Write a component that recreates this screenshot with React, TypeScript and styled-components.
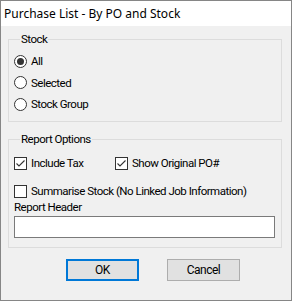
import React from 'react'
import styled, { createGlobalStyle } from 'styled-components'

const GlobalStyle = createGlobalStyle`
  html, body {
    margin: 0;
    padding: 0;
    background: #f0f0f0;
  }
  * {
    box-sizing: border-box;
  }
`

const Window = styled.div`
  background: #f0f0f0;
  border: 1px solid #868686;
  color: #000;
  display: flex;
  flex-direction: column;
  font-family: Roboto, 'Segoe UI', sans-serif;
  font-size: 11.5px;
  height: 301px;
  letter-spacing: -0.5px;
  width: 292px;
`

const TitleBar = styled.div`
  align-items: center;
  background: #fff;
  display: flex;
  flex-shrink: 0;
  font-family: 'Noto Sans', 'Segoe UI', sans-serif;
  font-size: 12px;
  height: 25px;
  letter-spacing: 0;
  padding-left: 3px;
`

const Body = styled.div`
  padding: 5px 9px 0 7px;
`

const Group = styled.fieldset<{ $gap?: number }>`
  border: 1px solid #dcdcdc;
  margin: ${(p) => p.$gap ?? 0}px 0 0 0;
  min-width: 0;
  padding: 0 5px;
`

const Caption = styled.legend`
  line-height: 16px;
  margin-left: 6px;
  padding: 0 1px;
`

const RadioList = styled.div`
  display: flex;
  flex-direction: column;
  padding: 3px 0 6px;
`

const OptionRow = styled.label<{ $h?: number; $top?: number }>`
  align-items: center;
  column-gap: 4px;
  display: flex;
  height: ${(p) => p.$h ?? 22}px;
  margin-top: ${(p) => p.$top ?? 0}px;
  white-space: nowrap;
`

const RadioMark = styled.span<{ $on?: boolean }>`
  align-items: center;
  background: #fff;
  border: 1px solid #333;
  border-radius: 50%;
  display: inline-flex;
  flex-shrink: 0;
  height: 13px;
  justify-content: center;
  width: 13px;

  &::after {
    background: #333;
    border-radius: 50%;
    content: '';
    display: ${(p) => (p.$on ? 'block' : 'none')};
    height: 7px;
    width: 7px;
  }
`

const BoxMark = styled.span`
  background: #fff;
  border: 1px solid #333;
  display: inline-flex;
  flex-shrink: 0;
  height: 13px;
  width: 13px;
`

const OptionsBlock = styled.div`
  display: flex;
  flex-direction: column;
  padding: 7px 0 9px;
`

const CheckGrid = styled.div`
  display: grid;
  grid-template-columns: 101px 1fr;
`

const FieldLabel = styled.div`
  line-height: 16px;
  margin-top: -1px;
`

const TextInput = styled.input`
  background: #fff;
  border: 1px solid #7a7a7a;
  height: 22px;
  margin: 1px 0 0;
  outline: none;
  padding: 0 3px;
  width: 261px;
`

const ButtonRow = styled.div`
  column-gap: 28px;
  display: flex;
  margin-top: 11px;
  padding-left: 58px;
`

const Button = styled.button<{ $primary?: boolean }>`
  background: #e1e1e1;
  border: ${(p) => (p.$primary ? '2px solid #0078d7' : '1px solid #adadad')};
  color: #000;
  font-family: inherit;
  font-size: 12px;
  height: 22px;
  letter-spacing: inherit;
  padding: 0;
  width: 73px;
`

const Check = ({ on }: { on?: boolean }) => (
  <BoxMark>
    {on && (
      <svg width="11" height="11" viewBox="0 0 11 11">
        <path d="M1.5 5.5 L4 8 L9.5 2.5" fill="none" stroke="#333" strokeWidth="1.1" />
      </svg>
    )}
  </BoxMark>
)

export default function App() {
  return (
    <>
      <GlobalStyle />
      <Window>
        <TitleBar>Purchase List - By PO and Stock</TitleBar>
        <Body>
          <Group>
            <Caption>Stock</Caption>
            <RadioList>
              <OptionRow>
                <RadioMark $on />
                All
              </OptionRow>
              <OptionRow $h={21}>
                <RadioMark />
                Selected
              </OptionRow>
              <OptionRow>
                <RadioMark />
                Stock Group
              </OptionRow>
            </RadioList>
          </Group>
          <Group $gap={9}>
            <Caption>Report Options</Caption>
            <OptionsBlock>
              <CheckGrid>
                <OptionRow $h={18}>
                  <Check on />
                  Include Tax
                </OptionRow>
                <OptionRow $h={18}>
                  <Check on />
                  Show Original PO#
                </OptionRow>
              </CheckGrid>
              <OptionRow $h={18} $top={10}>
                <Check />
                Summarise Stock (No Linked Job Information)
              </OptionRow>
              <FieldLabel>Report Header</FieldLabel>
              <TextInput />
            </OptionsBlock>
          </Group>
          <ButtonRow>
            <Button $primary>OK</Button>
            <Button>Cancel</Button>
          </ButtonRow>
        </Body>
      </Window>
    </>
  )
}
